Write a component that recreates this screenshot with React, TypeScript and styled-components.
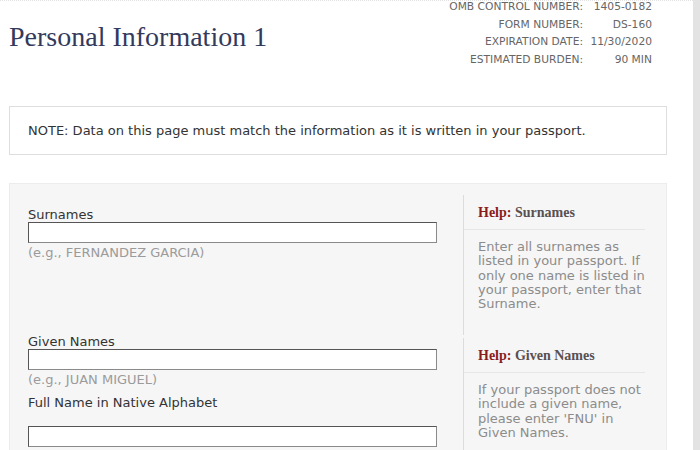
import styled, { createGlobalStyle } from "styled-components";

const GlobalStyle = createGlobalStyle`
  html, body {
    margin: 0;
    padding: 0;
    background: #ffffff;
  }
  body {
    font-family: "DejaVu Sans", Verdana, sans-serif;
    font-size: 13px;
    color: #333333;
    overflow: hidden;
  }
`;

const controlInfo = [
  { label: "OMB CONTROL NUMBER:", value: "1405-0182" },
  { label: "FORM NUMBER:", value: "DS-160" },
  { label: "EXPIRATION DATE:", value: "11/30/2020" },
  { label: "ESTIMATED BURDEN:", value: "90 MIN" },
];

function App() {
  return (
    <>
      <GlobalStyle />
      <Page>
        <Main>
          <Header>
            <Title>Personal Information 1</Title>
            <ControlTable>
              {controlInfo.map((row) => (
                <ControlRow key={row.label}>
                  <ControlLabel>{row.label}</ControlLabel>
                  <ControlValue>{row.value}</ControlValue>
                </ControlRow>
              ))}
            </ControlTable>
          </Header>

          <Note>
            NOTE: Data on this page must match the information as it is written
            in your passport.
          </Note>

          <Panel>
            <Row>
              <Fields $top={13}>
                <Field>
                  <Label>Surnames</Label>
                  <TextInput type="text" />
                  <Hint>(e.g., FERNANDEZ GARCIA)</Hint>
                </Field>
              </Fields>
              <HelpBox>
                <HelpTitle>
                  <HelpWord>Help:</HelpWord> Surnames
                </HelpTitle>
                <HelpText>
                  Enter all surnames as listed in your passport. If only one
                  name is listed in your passport, enter that Surname.
                </HelpText>
              </HelpBox>
            </Row>
            <Row>
              <Fields $top={0}>
                <Field>
                  <Label>Given Names</Label>
                  <TextInput type="text" />
                  <Hint>(e.g., JUAN MIGUEL)</Hint>
                </Field>
                <Field>
                  <Label>Full Name in Native Alphabet</Label>
                  <TextInput type="text" $gap={16} />
                </Field>
              </Fields>
              <HelpBox $gap={3}>
                <HelpTitle>
                  <HelpWord>Help:</HelpWord> Given Names
                </HelpTitle>
                <HelpText>
                  If your passport does not include a given name, please enter
                  'FNU' in Given Names.
                </HelpText>
              </HelpBox>
            </Row>
          </Panel>
        </Main>
        <SideStrip />
      </Page>
    </>
  );
}

export default App;

const Page = styled.div`
  display: flex;
  width: 700px;
  height: 450px;
  overflow: hidden;
`;

const Main = styled.div`
  flex: 1;
  padding: 0 26px 0 9px;
  border-top: 1px dotted #e2e2e2;
`;

const SideStrip = styled.div`
  width: 7px;
  background: #e3e3e3;
`;

const Header = styled.div`
  display: flex;
  justify-content: space-between;
  align-items: flex-start;
  padding-right: 15px;
`;

const Title = styled.h1`
  margin: 20px 0 0 0;
  font-family: "Liberation Serif", "Times New Roman", serif;
  font-weight: normal;
  font-size: 28px;
  color: #333a5c;
`;

const ControlTable = styled.div`
  display: grid;
  margin-top: -3px;
  font-size: 10.7px;
  color: #666666;
`;

const ControlRow = styled.div`
  display: grid;
  grid-template-columns: auto 63px;
  column-gap: 6px;
  line-height: 17.7px;
`;

const ControlLabel = styled.span`
  text-align: right;
`;

const ControlValue = styled.span`
  text-align: right;
`;

const Note = styled.div`
  margin-top: 37px;
  padding: 17px 18px 16px;
  border: 1px solid #dedede;
  background: #ffffff;
  line-height: 14px;
  color: #333333;
`;

const Panel = styled.div`
  margin-top: 28px;
  padding: 11px 21px 0 18px;
  background: #f6f6f6;
  border: 1px solid #ececec;
  border-bottom: none;
  height: 300px;
`;

const Row = styled.div`
  display: grid;
  grid-template-columns: 1fr 182px;
  align-items: start;
`;

const Fields = styled.div<{ $top: number }>`
  padding-top: ${(p) => p.$top}px;
  display: flex;
  flex-direction: column;
  gap: 9px;
`;

const Field = styled.div`
  display: flex;
  flex-direction: column;
`;

const Label = styled.label`
  line-height: 14px;
  color: #333333;
`;

const TextInput = styled.input<{ $gap?: number }>`
  box-sizing: border-box;
  width: 409px;
  height: 21px;
  margin: ${(p) => p.$gap ?? 0}px 0 0 0;
  padding: 1px 3px;
  background: #ffffff;
  border: 1px solid #8a8a8a;
  border-top-color: #555555;
  border-left-color: #555555;
  font-family: inherit;
  font-size: 13px;
`;

const Hint = styled.span`
  margin-top: 3px;
  line-height: 14px;
  color: #9b9b9b;
`;

const HelpBox = styled.div<{ $gap?: number }>`
  margin-top: ${(p) => p.$gap ?? 0}px;
  border-left: 1px solid #dcdcdc;
`;

const HelpTitle = styled.div`
  padding: 10px 0 8px 14px;
  border-bottom: 1px solid #e6e6e6;
  font-family: "Liberation Serif", "Times New Roman", serif;
  font-weight: bold;
  font-size: 14px;
  line-height: 16px;
  color: #5a5050;
`;

const HelpWord = styled.span`
  color: #8b1c1c;
`;

const HelpText = styled.div`
  padding: 10px 0 23px 14px;
  line-height: 14.4px;
  color: #8c8c8c;
`;
